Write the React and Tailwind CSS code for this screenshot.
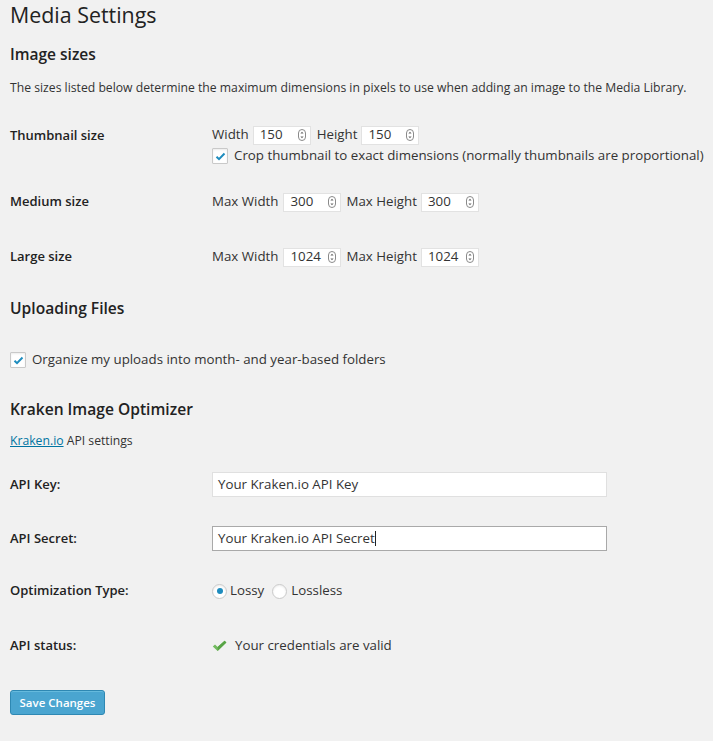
import React, { useState } from "react";

const font = { fontFamily: '"Open Sans", "Noto Sans", sans-serif' };

const Spinner = () => (
  <svg width="8" height="12" viewBox="0 0 8 12" className="shrink-0">
    <rect x="0.5" y="0.5" width="7" height="11" rx="3.5" fill="#fff" stroke="#8a8a8a" />
    <path d="M2.4 4.6 L4 2.8 L5.6 4.6 Z" fill="#666" />
    <path d="M2.4 7.4 L4 9.2 L5.6 7.4 Z" fill="#666" />
  </svg>
);

const NumberBox = ({ value }) => (
  <div className="w-[58px] h-[19px] bg-white border border-[#e2e2e2] flex items-center justify-between pl-[6px] pr-[4px] text-[13.3px] text-[#333]">
    <span>{value}</span>
    <Spinner />
  </div>
);

const Checkbox = ({ checked }) => (
  <span className="w-[16px] h-[16px] bg-white border border-[#c9c9c9] rounded-[1px] shadow-[inset_0_1px_2px_rgba(0,0,0,0.08)] flex items-center justify-center shrink-0">
    {checked && (
      <svg width="11" height="9" viewBox="0 0 11 9">
        <path d="M1.5 4.8 L4 7.2 L9.5 1.5" fill="none" stroke="#1e8cbe" strokeWidth="2" />
      </svg>
    )}
  </span>
);

const Radio = ({ checked }) => (
  <span className="w-[15px] h-[15px] bg-white border border-[#c9c9c9] rounded-full shadow-[inset_0_1px_2px_rgba(0,0,0,0.08)] flex items-center justify-center shrink-0">
    {checked && <span className="w-[6px] h-[6px] rounded-full bg-[#1e8cbe]" />}
  </span>
);

const Label = ({ children }) => (
  <div className="w-[202px] shrink-0 text-[13px] font-semibold text-[#222]">{children}</div>
);

const SizeInputs = ({ w, h, prefix = "Max " }) => (
  <div className="h-[20px] flex items-center text-[13.3px]">
    <span>{prefix}Width</span>
    <span className={prefix ? "ml-[5px]" : "ml-[4px]"}><NumberBox value={w} /></span>
    <span className={prefix ? "ml-[5px]" : "ml-[6px]"}>{prefix}Height</span>
    <span className={prefix ? "ml-[4px]" : "ml-[4px]"}><NumberBox value={h} /></span>
  </div>
);

export default function App() {
  const [type, setType] = useState("lossy");

  return (
    <div className="min-h-[741px] bg-[#f1f1f1] pl-[10px] text-[#333]" style={font}>
      <h1 className="h-[30px] leading-[30px] text-[21.4px] font-normal text-[#222]">Media Settings</h1>

      <h2 className="mt-[12px] h-[24px] leading-[24px] text-[15.5px] font-semibold text-[#222]">Image sizes</h2>
      <p className="mt-[12px] h-[20px] leading-[20px] text-[12.2px]">
        The sizes listed below determine the maximum dimensions in pixels to use when adding an image to the Media Library.
      </p>

      {/* thumbnail */}
      <div className="mt-[27px] flex">
        <Label>
          <div className="h-[20px] leading-[20px]">Thumbnail size</div>
        </Label>
        <div className="flex flex-col">
          <SizeInputs w="150" h="150" prefix="" />
          <label className="mt-[1px] h-[20px] flex items-center text-[13.3px]">
            <Checkbox checked />
            <span className="ml-[6px]">Crop thumbnail to exact dimensions (normally thumbnails are proportional)</span>
          </label>
        </div>
      </div>

      {/* medium */}
      <div className="mt-[26px] flex h-[20px] items-center">
        <Label>Medium size</Label>
        <SizeInputs w="300" h="300" />
      </div>

      {/* large */}
      <div className="mt-[35px] flex h-[20px] items-center">
        <Label>Large size</Label>
        <SizeInputs w="1024" h="1024" />
      </div>

      <h2 className="mt-[29px] h-[24px] leading-[24px] text-[15.6px] font-semibold text-[#222]">Uploading Files</h2>

      <label className="mt-[30px] h-[20px] flex items-center text-[13.3px]">
        <Checkbox checked />
        <span className="ml-[6px]">Organize my uploads into month- and year-based folders</span>
      </label>

      <h2 className="mt-[27px] h-[24px] leading-[24px] text-[15.6px] font-semibold text-[#222]">Kraken Image Optimizer</h2>
      <p className="mt-[10px] h-[20px] leading-[20px] text-[12.2px]">
        <a className="text-[#0074a2] underline">Kraken.io</a> API settings
      </p>

      <div className="mt-[21px] flex items-center">
        <Label>API Key:</Label>
        <div className="w-[395px] h-[25px] bg-white border border-[#e0e0e0] px-[5px] flex items-center text-[13.3px] text-[#333]">
          Your Kraken.io API Key
        </div>
      </div>

      <div className="mt-[29px] flex items-center">
        <Label>API Secret:</Label>
        <div className="w-[395px] h-[25px] bg-white border border-[#a9a9a9] px-[5px] flex items-center text-[13.3px] text-[#333]">
          <span>Your Kraken.io API Secret</span>
          <span className="w-px h-[15px] bg-[#222]" />
        </div>
      </div>

      <div className="mt-[30px] flex h-[20px] items-center">
        <Label>Optimization Type:</Label>
        <div className="flex items-center text-[13.3px]">
          <label className="flex items-center cursor-pointer" onClick={() => setType("lossy")}>
            <Radio checked={type === "lossy"} />
            <span className="ml-[3px]">Lossy</span>
          </label>
          <label className="ml-[8px] flex items-center cursor-pointer" onClick={() => setType("lossless")}>
            <Radio checked={type === "lossless"} />
            <span className="ml-[4px]">Lossless</span>
          </label>
        </div>
      </div>

      <div className="mt-[35px] flex h-[20px] items-center">
        <Label>API status:</Label>
        <div className="flex items-center text-[13.3px]">
          <svg width="15" height="12" viewBox="0 0 15 12" className="mr-[8px]">
            <path d="M0.8 6.6 L3 4.6 L5.6 7 L12.6 0.8 L14.4 2.6 L5.6 11 Z" fill="#72bb5f" />
            <path d="M5.6 7 L12.6 0.8 L14.4 2.6 L5.6 11 Z" fill="#58a446" />
          </svg>
          <span>Your credentials are valid</span>
        </div>
      </div>

      <button
        className="mt-[34px] w-[95px] h-[25px] rounded-[3px] bg-[#4aa5d0] border border-[#2e88b3] text-white text-[11.5px] font-semibold shadow-[inset_0_1px_0_rgba(120,200,230,0.6)]"
        style={font}
      >
        Save Changes
      </button>
    </div>
  );
}
